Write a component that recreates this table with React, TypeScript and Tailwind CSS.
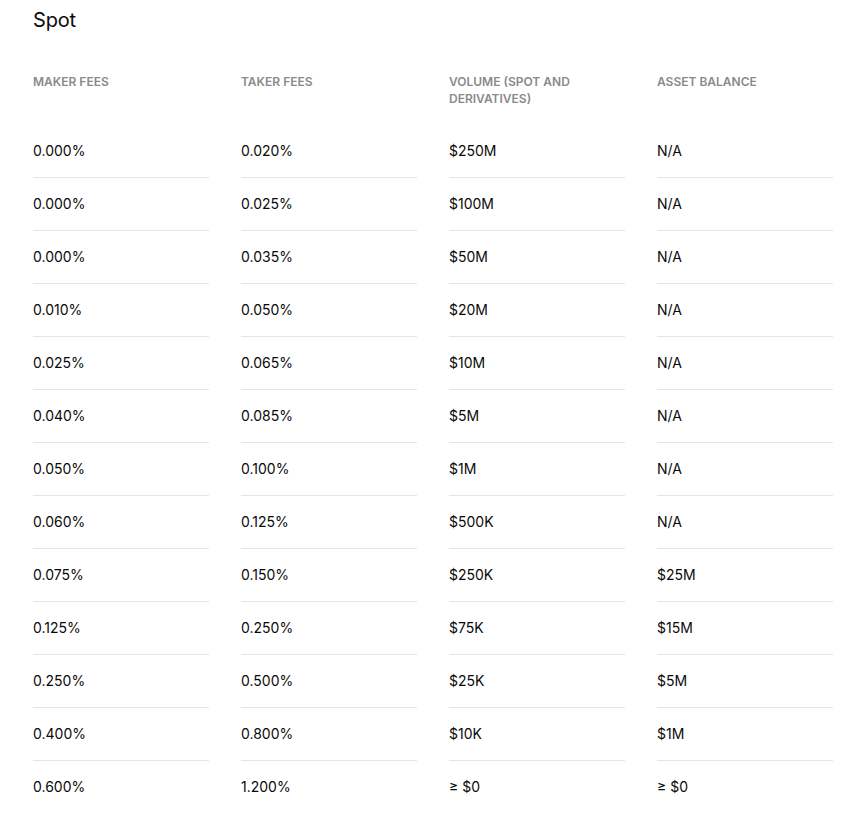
import React from 'react';

type Row = [string, string, string, string];

const headers = ['Maker fees', 'Taker fees', 'Volume (spot and derivatives)', 'Asset balance'];

const rows: Row[] = [
  ['0.000%', '0.020%', '$250M', 'N/A'],
  ['0.000%', '0.025%', '$100M', 'N/A'],
  ['0.000%', '0.035%', '$50M', 'N/A'],
  ['0.010%', '0.050%', '$20M', 'N/A'],
  ['0.025%', '0.065%', '$10M', 'N/A'],
  ['0.040%', '0.085%', '$5M', 'N/A'],
  ['0.050%', '0.100%', '$1M', 'N/A'],
  ['0.060%', '0.125%', '$500K', 'N/A'],
  ['0.075%', '0.150%', '$250K', '$25M'],
  ['0.125%', '0.250%', '$75K', '$15M'],
  ['0.250%', '0.500%', '$25K', '$5M'],
  ['0.400%', '0.800%', '$10K', '$1M'],
  ['0.600%', '1.200%', '≥ $0', '≥ $0'],
];

const App = () => {
  return (
    <div className="min-h-screen bg-white font-['Inter',sans-serif] text-[#0a0a0a]">
      <div className="w-[833px] pl-[33px] pt-[6px]">
        <h2 className="text-[20px] leading-[28px] tracking-[-0.2px]">Spot</h2>
        <div className="mt-[39px] grid grid-cols-4 gap-x-8">
          {headers.map((h) => (
            <div
              key={h}
              className="pb-[18px] pr-6 text-[12px] font-semibold uppercase leading-[17px] text-[#8a8a8a]"
            >
              {h}
            </div>
          ))}
          {rows.map((row, i) =>
            row.map((cell, j) => (
              <div
                key={`${i}-${j}`}
                className={`py-4 text-[14px] leading-[20px] ${
                  i < rows.length - 1 ? 'border-b border-[#e5e5e5]' : ''
                }`}
              >
                {cell}
              </div>
            )),
          )}
        </div>
      </div>
    </div>
  );
};

export default App;
